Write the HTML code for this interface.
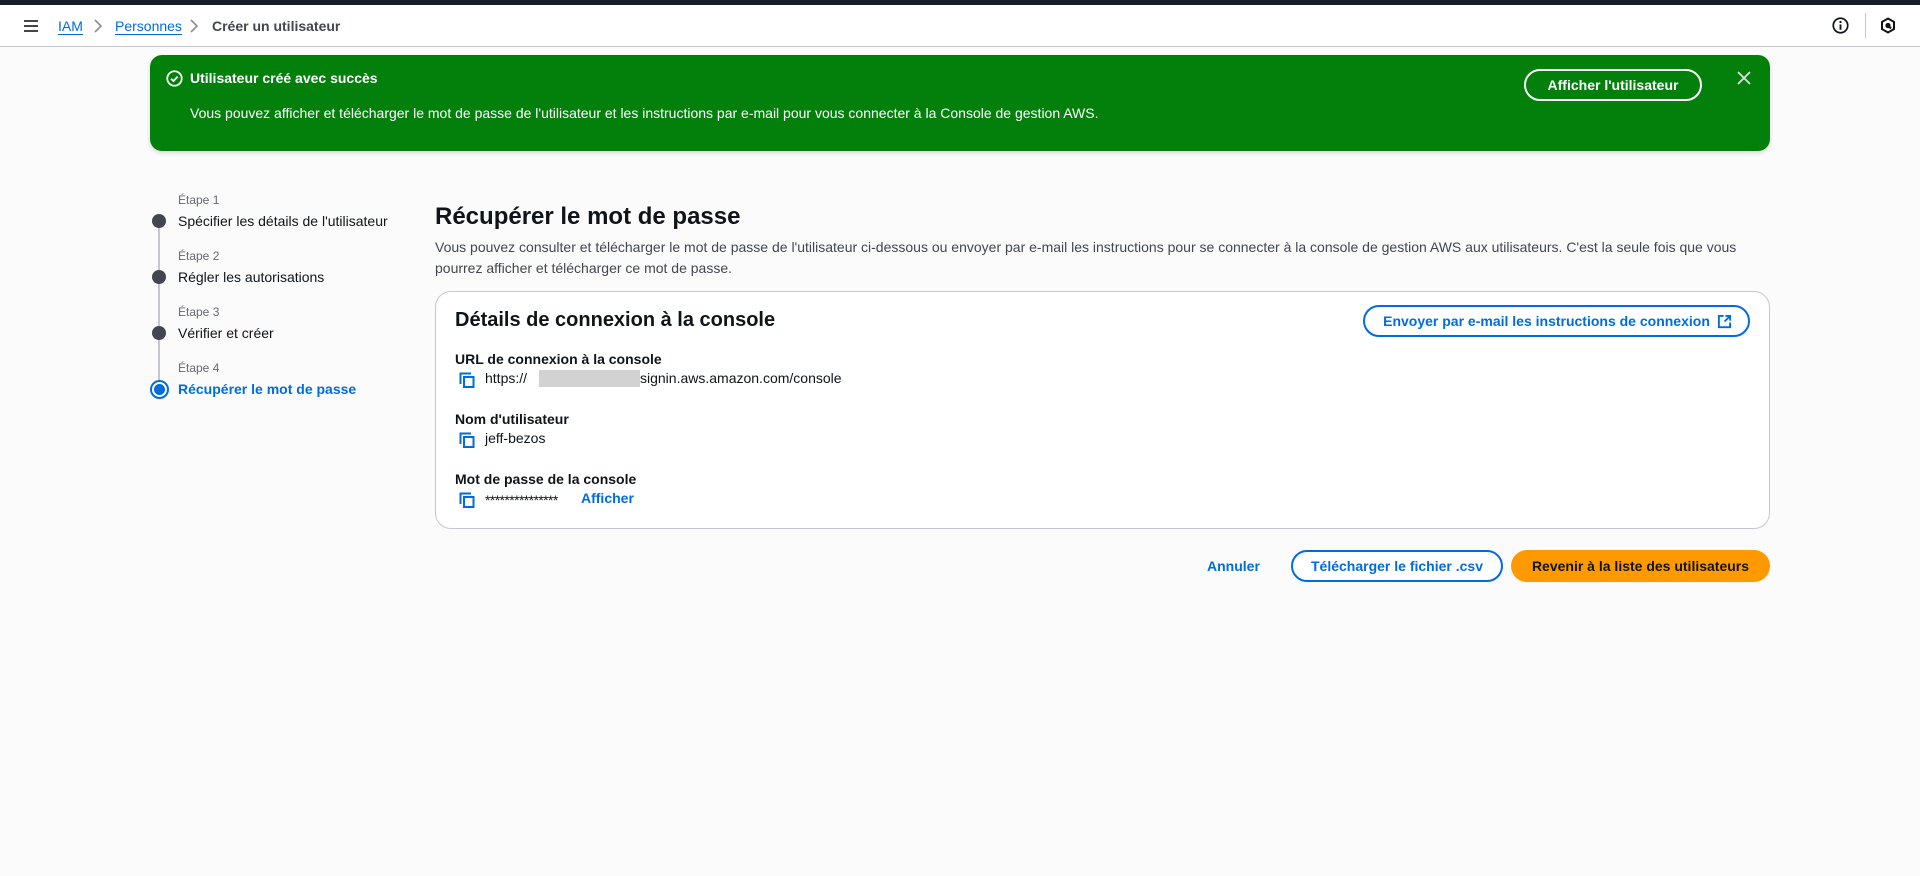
<!DOCTYPE html>
<html><head><meta charset="utf-8">
<style>
*{box-sizing:border-box;margin:0;padding:0}
body{width:1920px;height:876px;background:#fbfbfb;font-family:"Liberation Sans",sans-serif;color:#0f141a;font-size:14px;position:relative;overflow:hidden}
.abs{position:absolute}
.topbar{left:0;top:0;width:1920px;height:5px;background:#161d26}
.header{left:0;top:5px;width:1920px;height:42px;background:#fff;border-bottom:1px solid #c6c6cd}
.bc{top:12px;font-size:14px;line-height:18px}
.link{color:#006ce0;border-bottom:1px solid #006ce0}
.banner{left:150px;top:55px;width:1620px;height:96px;background:#037f0c;border-radius:12px;color:#fff;box-shadow:0 2px 4px rgba(0,0,0,.15)}
.btn{position:absolute;border-radius:20px;font-weight:bold;font-size:14px;text-align:center}
.step-s{font-size:12px;color:#656871}
.step-t{font-size:14px;color:#0f141a}
.dot{position:absolute;left:152px;width:14px;height:14px;border-radius:50%;background:#424650}
.line{position:absolute;left:158px;width:2px;background:#c6c6cd}
.card{left:435px;top:291px;width:1335px;height:238px;background:#fff;border:1px solid #c6c6cd;border-radius:16px}
.lbl{font-weight:bold;font-size:14px}
</style></head><body>
<div class="abs topbar"></div>
<div class="abs header">
  <svg class="abs" style="left:23px;top:14px" width="16" height="14" viewBox="0 0 16 14"><path d="M1 2h14M1 7h14M1 12h14" stroke="#424650" stroke-width="2"/></svg>
  <div class="abs bc" style="left:58px"><span class="link">IAM</span></div>
  <svg class="abs" style="left:93px;top:14px" width="10" height="14" viewBox="0 0 10 14"><path d="M2 1l6 6-6 6" stroke="#8c8c94" stroke-width="1.6" fill="none"/></svg>
  <div class="abs bc" style="left:115px"><span class="link">Personnes</span></div>
  <svg class="abs" style="left:189px;top:14px" width="10" height="14" viewBox="0 0 10 14"><path d="M2 1l6 6-6 6" stroke="#8c8c94" stroke-width="1.6" fill="none"/></svg>
  <div class="abs bc" style="left:212px;color:#424650;font-weight:bold">Créer un utilisateur</div>
  <svg class="abs" style="left:1832px;top:12px" width="17" height="17" viewBox="0 0 16 16"><circle cx="8" cy="8" r="6.8" stroke="#0f141a" stroke-width="1.6" fill="none"/><path d="M8 7v5" stroke="#0f141a" stroke-width="1.8"/><circle cx="8" cy="4.7" r="1.1" fill="#0f141a"/></svg>
  <div class="abs" style="left:1865px;top:8px;width:1px;height:25px;background:#c6c6cd"></div>
  <svg class="abs" style="left:1880px;top:12px" width="16" height="17" viewBox="0 0 16 17"><path d="M8 1.5l6 3.4v7.2l-6 3.4-6-3.4V4.9z" stroke="#0f141a" stroke-width="2" fill="none"/><circle cx="8" cy="8.5" r="2.6" fill="#0f141a"/><path d="M8 8.5l3 3" stroke="#0f141a" stroke-width="2"/></svg>
</div>

<div class="abs banner">
  <svg class="abs" style="left:16px;top:15px" width="17" height="17" viewBox="0 0 16 16"><circle cx="8" cy="8" r="6.8" stroke="#fff" stroke-width="1.7" fill="none"/><path d="M4.8 8.2l2.2 2.2 4-4.2" stroke="#fff" stroke-width="1.7" fill="none"/></svg>
  <div class="abs" style="left:40px;top:15px;font-weight:bold;font-size:14px">Utilisateur créé avec succès</div>
  <div class="abs" style="left:40px;top:50px;font-size:14px">Vous pouvez afficher et télécharger le mot de passe de l'utilisateur et les instructions par e-mail pour vous connecter à la Console de gestion AWS.</div>
  <div class="btn" style="left:1374px;top:14px;width:178px;height:32px;border:2px solid #fff;line-height:28px;color:#fff">Afficher l'utilisateur</div>
  <svg class="abs" style="left:1587px;top:16px" width="14" height="14" viewBox="0 0 14 14"><path d="M1 1l12 12M13 1L1 13" stroke="#e0e0e0" stroke-width="1.8"/></svg>
</div>

<div class="line" style="top:227px;height:162px"></div>
<div class="abs step-s" style="left:178px;top:193px">Étape 1</div>
<div class="abs step-t" style="left:178px;top:213px">Spécifier les détails de l'utilisateur</div>
<div class="dot" style="top:214px"></div>
<div class="abs step-s" style="left:178px;top:249px">Étape 2</div>
<div class="abs step-t" style="left:178px;top:269px">Régler les autorisations</div>
<div class="dot" style="top:270px"></div>
<div class="abs step-s" style="left:178px;top:305px">Étape 3</div>
<div class="abs step-t" style="left:178px;top:325px">Vérifier et créer</div>
<div class="dot" style="top:326px"></div>
<div class="abs step-s" style="left:178px;top:361px">Étape 4</div>
<div class="abs step-t" style="left:178px;top:381px;color:#006ce0;font-weight:bold">Récupérer le mot de passe</div>
<div class="abs" style="left:150px;top:380px;width:19px;height:19px;border-radius:50%;border:2px solid #006ce0;background:#fff"></div>
<div class="abs" style="left:154px;top:384px;width:11px;height:11px;border-radius:50%;background:#006ce0"></div>

<div class="abs" style="left:435px;top:203px;font-size:24px;font-weight:bold">Récupérer le mot de passe</div>
<div class="abs" style="left:435px;top:237px;width:1330px;font-size:14px;line-height:21px;color:#424650">Vous pouvez consulter et télécharger le mot de passe de l'utilisateur ci-dessous ou envoyer par e-mail les instructions pour se connecter à la console de gestion AWS aux utilisateurs. C'est la seule fois que vous pourrez afficher et télécharger ce mot de passe.</div>

<div class="abs card">
  <div class="abs" style="left:19px;top:17px;font-size:20px;font-weight:bold">Détails de connexion à la console</div>
  <div class="btn" style="left:927px;top:13px;width:387px;height:32px;border:2px solid #006ce0;color:#006ce0;line-height:28px;padding-right:20px">Envoyer par e-mail les instructions de connexion</div>
  <svg class="abs" style="left:1281px;top:22px" width="15" height="15" viewBox="0 0 16 16"><path d="M7 2H2v12h12V9" stroke="#006ce0" stroke-width="2" fill="none"/><path d="M9 2h5v5M14 2L8 8" stroke="#006ce0" stroke-width="2" fill="none"/></svg>

  <div class="abs lbl" style="left:19px;top:59px">URL de connexion à la console</div>
  <svg class="abs" style="left:23px;top:80px" width="16" height="16" viewBox="0 0 16 16"><path d="M1.5 12V1.5H12" stroke="#006ce0" stroke-width="2" fill="none"/><rect x="5" y="5" width="9.5" height="10" stroke="#006ce0" stroke-width="2" fill="none"/></svg>
  <div class="abs" style="left:49px;top:78px">https://</div>
  <div class="abs" style="left:103px;top:78px;width:101px;height:17px;background:#d2d2d2"></div>
  <div class="abs" style="left:204px;top:78px">signin.aws.amazon.com/console</div>

  <div class="abs lbl" style="left:19px;top:119px">Nom d'utilisateur</div>
  <svg class="abs" style="left:23px;top:140px" width="16" height="16" viewBox="0 0 16 16"><path d="M1.5 12V1.5H12" stroke="#006ce0" stroke-width="2" fill="none"/><rect x="5" y="5" width="9.5" height="10" stroke="#006ce0" stroke-width="2" fill="none"/></svg>
  <div class="abs" style="left:49px;top:138px">jeff-bezos</div>

  <div class="abs lbl" style="left:19px;top:179px">Mot de passe de la console</div>
  <svg class="abs" style="left:23px;top:200px" width="16" height="16" viewBox="0 0 16 16"><path d="M1.5 12V1.5H12" stroke="#006ce0" stroke-width="2" fill="none"/><rect x="5" y="5" width="9.5" height="10" stroke="#006ce0" stroke-width="2" fill="none"/></svg>
  <div class="abs" style="left:49px;top:200px;font-size:14px;letter-spacing:-.6px">***************</div>
  <div class="abs" style="left:145px;top:198px;color:#006ce0;font-weight:bold">Afficher</div>
</div>

<div class="abs" style="left:1207px;top:558px;color:#006ce0;font-weight:bold">Annuler</div>
<div class="btn" style="left:1291px;top:550px;width:212px;height:32px;border:2px solid #006ce0;color:#006ce0;line-height:28px;background:#fff">Télécharger le fichier .csv</div>
<div class="btn" style="left:1511px;top:550px;width:259px;height:32px;background:#ff9900;color:#0f141a;line-height:32px">Revenir à la liste des utilisateurs</div>
</body></html>
